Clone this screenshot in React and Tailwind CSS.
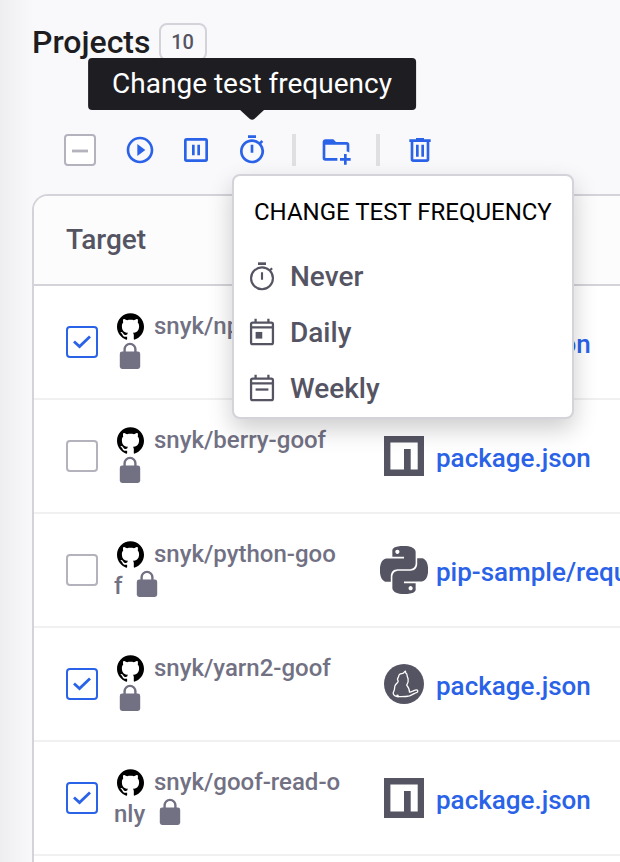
import React, { useState } from 'react';
import { MdOutlineTimer, MdPlayCircleOutline } from 'react-icons/md';
import { SiGithub, SiPython } from 'react-icons/si';

const initialProjects = [
  { id: 1, target: 'snyk/npm-goof', file: 'package.json', type: 'npm', selected: true },
  { id: 2, target: 'snyk/berry-goof', file: 'package.json', type: 'npm', selected: false },
  { id: 3, target: 'snyk/python-goof', file: 'pip-sample/requirements.txt', type: 'pip', selected: false },
  { id: 4, target: 'snyk/yarn2-goof', file: 'package.json', type: 'yarn', selected: true },
  { id: 5, target: 'snyk/goof-read-only', file: 'package.json', type: 'npm', selected: true },
];

const frequencies = [
  { label: 'Never', icon: TimerThinIcon },
  { label: 'Daily', icon: DailyIcon },
  { label: 'Weekly', icon: WeeklyIcon },
];

/* Icons */
function Glyph({ d }) {
  return (
    <svg viewBox="0 0 24 24" className="size-8" fill="currentColor" aria-hidden="true">
      <path d={d} />
    </svg>
  );
}

const PAUSE = 'M19 3a2 2 0 0 1 2 2v14a2 2 0 0 1-2 2H5a2 2 0 0 1-2-2V5a2 2 0 0 1 2-2h14M5 19h14V5H5v14M9 8h2v8H9V8m4 0h2v8h-2V8z';
const FOLDER_PLUS = 'M13 19c0 .34.04.67.09 1H4a2 2 0 0 1-2-2V6c0-1.11.89-2 2-2h6l2 2h8a2 2 0 0 1 2 2v5.81c-.61-.35-1.28-.59-2-.72V8H4v10h9.09c-.05.33-.09.66-.09 1m7-1v-3h-2v3h-3v2h3v3h2v-3h3v-2h-3z';
const TRASH = 'M9 3v1H4v2h1v13a2 2 0 0 0 2 2h10a2 2 0 0 0 2-2V6h1V4h-5V3H9M7 6h10v13H7V6m2 2v9h2V8H9m4 0v9h2V8h-2z';

function TimerThinIcon() {
  return (
    <svg viewBox="0 0 24 24" className="size-8" fill="none" stroke="currentColor" strokeWidth="1.6" aria-hidden="true">
      <circle cx="12" cy="13" r="8.2" />
      <path d="M9 2h6" strokeWidth="2" />
      <path d="M12 8.5v5.5M18 7l1.6-1.6" />
    </svg>
  );
}

function CalendarIcon({ children }) {
  return (
    <svg viewBox="0 0 24 24" className="size-8" fill="none" stroke="currentColor" strokeWidth="1.7" aria-hidden="true">
      <rect x="3.8" y="4.2" width="16.4" height="16.2" rx="1.3" />
      <path d="M4 7.8h16M7.2 1.4v3M16.8 1.4v3" />
      {children}
    </svg>
  );
}

function DailyIcon() {
  return (
    <CalendarIcon>
      <path d="M7.2 11.2h5v5h-5z" fill="currentColor" stroke="none" />
    </CalendarIcon>
  );
}

function WeeklyIcon() {
  return (
    <CalendarIcon>
      <path d="M7.2 12.4h9.6" />
    </CalendarIcon>
  );
}

function LockIcon() {
  return (
    <svg viewBox="0 0 32 32" className="inline-block size-8 align-top" aria-label="Private">
      <path d="M10.6 12V7.300a5.400 5.400 0 0 1 10.800 0V12" fill="none" stroke="currentColor" strokeWidth="2.4" />
      <rect x="5.800" y="9.500" width="20.400" height="17.500" rx="2.400" fill="currentColor" />
    </svg>
  );
}

function NpmIcon() {
  return (
    <svg viewBox="0 0 40 40" className="size-10" fill="currentColor" aria-hidden="true">
      <path fillRule="evenodd" d="M0 0h40v40H0zM6.4 6.4v27.2H20V13h6.7v20.6h7V6.4z" />
    </svg>
  );
}

function YarnIcon() {
  return (
    <svg viewBox="0 0 40 40" className="size-10" aria-hidden="true">
      <circle cx="20" cy="20" r="20" fill="currentColor" />
      <path
        d="M21.4 7.2c-.8.4-1.3 1.4-2.1 1.9-1.1.5-2.6.4-3.6 1.1-1 .8-.9 1.9-1.3 2.9-.3.8-1 1.5-.9 2.3.1.9.8 1.3.6 2.1-.4 1.3-2 2.3-2.9 3.8-.7 1.4-.5 2.9-.8 4.3-.3 1.4-1.2 2.4-1.2 3.7 0 1.4.9 1.9 1.7 2.5.9.7 2.6 1 4.1.9 3.5-.1 7.2.1 10.5-.9 2.7-.9 4.9-2.5 7.5-3.5.9-.4 1-1.7.2-2.2-1.1-.6-2.6.2-3.8.7-1.3.6-2.3 1.500-3.900 1.400.2-2.900-1.200-5-2.800-7.100 1.300-1.900 1.900-3.700 1.400-6.100-.3-1.300-.9-2.200-1-3.500-.1-1.300-.4-2.200-1.300-2.300zM12.500 31.500c.7-.5 1.400-.4 2 .3"
        fill="none"
        stroke="#fff"
        strokeWidth="1.3"
        strokeLinejoin="round"
      />
    </svg>
  );
}

const typeIcons = {
  npm: <NpmIcon />,
  pip: <SiPython className="size-12" aria-hidden="true" />,
  yarn: <YarnIcon />,
};

/* Controls */
function Checkbox({ label, checked, partial, onChange }) {
  return (
    <span className="grid size-8 shrink-0 place-items-center">
      <input
        type="checkbox"
        aria-label={label}
        checked={checked}
        onChange={onChange}
        className="col-start-1 row-start-1 size-8 appearance-none rounded border-2 border-[#b3b2bd] bg-white checked:border-[#2a62e8]"
      />
      {(checked || partial) && (
        <svg viewBox="0 0 32 32" className="pointer-events-none col-start-1 row-start-1 size-8" fill="none" aria-hidden="true">
          {checked ? (
            <path d="M8 15.5l5.500 5 10.500-10" stroke="#2a62e8" strokeWidth="2.800" />
          ) : (
            <path d="M8 17h16" stroke="#b3b2bd" strokeWidth="2.800" />
          )}
        </svg>
      )}
    </span>
  );
}

function ToolButton({ label, children }) {
  return (
    <button type="button" aria-label={label} className="size-8 text-[#2a62e8]">
      {children}
    </button>
  );
}

function Divider() {
  return <span className="h-8 w-1 bg-[#e0e0e0]" />;
}

function FrequencyMenu() {
  return (
    <div role="menu" className="absolute top-10 -left-1 z-10 w-[342px] rounded-lg border-2 border-[#d3d3d9] bg-white pb-px shadow-[0_10px_24px_rgba(0,0,0,0.2)]">
      <p className="flex h-18 items-center pl-5 text-2xl whitespace-nowrap text-black uppercase">Change test frequency</p>
      {frequencies.map(({ label, icon: Icon }) => (
        <button
          key={label}
          type="button"
          role="menuitem"
          className="flex h-14 w-full items-center gap-3 pt-0.5 pl-3 text-[28px] font-medium text-[#555463]"
        >
          <Icon />
          {label}
        </button>
      ))}
    </div>
  );
}

function Tooltip({ children }) {
  return (
    <div role="tooltip" className="absolute bottom-14 left-1/2 z-20 -translate-x-1/2">
      <div className="flex h-13 items-center rounded bg-[#1e1e22] px-6 text-[28px] whitespace-nowrap text-white">{children}</div>
      <svg viewBox="0 0 24 10" className="absolute top-full left-1/2 h-2.5 w-6 -translate-x-1/2" aria-hidden="true">
        <path d="M0 0h24l-9.500 8.700q-2.500 2-5 0z" fill="#1e1e22" />
      </svg>
    </div>
  );
}

export default function App() {
  const [projects, setProjects] = useState(initialProjects);

  const toggle = (id) =>
    setProjects((list) => list.map((p) => (p.id === id ? { ...p, selected: !p.selected } : p)));

  const all = projects.every((p) => p.selected);
  const some = projects.some((p) => p.selected);

  return (
    <main className="flex min-h-screen flex-col overflow-hidden bg-[linear-gradient(to_right,#eeeef1,#f9f9fc_33px)] pl-8 font-['Roboto',sans-serif]">
      {/* Heading */}
      <header className="flex items-center gap-2 pt-[23px]">
        <h1 className="text-[32px] leading-[38px] font-medium text-[#1e1e22]">Projects</h1>
        <span className="flex h-[38px] w-12 items-center justify-center rounded-lg border-2 border-[#d3d3d9] text-xl font-medium text-[#555463]">10</span>
      </header>

      {/* Bulk actions */}
      <div role="toolbar" className="mt-[73px] flex items-center gap-6 pl-8">
        <div className="mr-1">
          <Checkbox
            label="Select all projects"
            checked={all}
            partial={some && !all}
            onChange={() => setProjects((list) => list.map((p) => ({ ...p, selected: !all })))}
          />
        </div>
        <ToolButton label="Retest now"><MdPlayCircleOutline className="size-8" /></ToolButton>
        <ToolButton label="Deactivate"><Glyph d={PAUSE} /></ToolButton>
        <div className="relative size-8">
          <ToolButton label="Change test frequency"><MdOutlineTimer className="size-8" /></ToolButton>
          <Tooltip>Change test frequency</Tooltip>
          <FrequencyMenu />
        </div>
        <Divider />
        <ToolButton label="Move projects"><Glyph d={FOLDER_PLUS} /></ToolButton>
        <Divider />
        <ToolButton label="Delete"><Glyph d={TRASH} /></ToolButton>
      </div>

      {/* Projects table */}
      <section className="mt-7 flex-1 overflow-hidden rounded-tl-2xl border-t-2 border-l-2 border-[#d3d3d9] bg-white">
        <table className="w-full table-fixed border-collapse text-left">
          <thead>
            <tr className="h-[90px] bg-[#fcfcfc] shadow-[inset_0_-2px_0_#d3d3d9]">
              <th scope="col" className="w-[346px] pb-0.5 pl-8 text-[28px] font-medium text-[#555463]">Target</th>
              <th scope="col" aria-label="Project" />
            </tr>
          </thead>
          <tbody>
            {projects.map((p) => (
              <tr key={p.id} className="h-[114px] shadow-[inset_0_-2px_0_#f0f0f1]">
                <td className="pb-0.5 pl-8">
                  <div className="flex items-center gap-4">
                    <Checkbox label={p.target} checked={p.selected} onChange={() => toggle(p.id)} />
                    <div className="w-[228px] text-2xl font-medium break-all text-[#727184]">
                      <span className="mr-2 inline-flex size-8 items-center justify-center align-top text-black">
                        <SiGithub className="size-[27px]" aria-hidden="true" />
                      </span>
                      {p.target}
                      <span className="text-4xl leading-4"> </span>
                      <LockIcon />
                    </div>
                  </div>
                </td>
                <td className="overflow-hidden pb-0.5">
                  <div className="flex items-center gap-2 text-[#555463]">
                    <span className="flex w-12 shrink-0 justify-center">{typeIcons[p.type]}</span>
                    <a href="#" className="pt-1 text-[26px] leading-8 font-medium whitespace-nowrap text-[#2a62e8]">{p.file}</a>
                  </div>
                </td>
              </tr>
            ))}
          </tbody>
        </table>
      </section>
    </main>
  );
}
